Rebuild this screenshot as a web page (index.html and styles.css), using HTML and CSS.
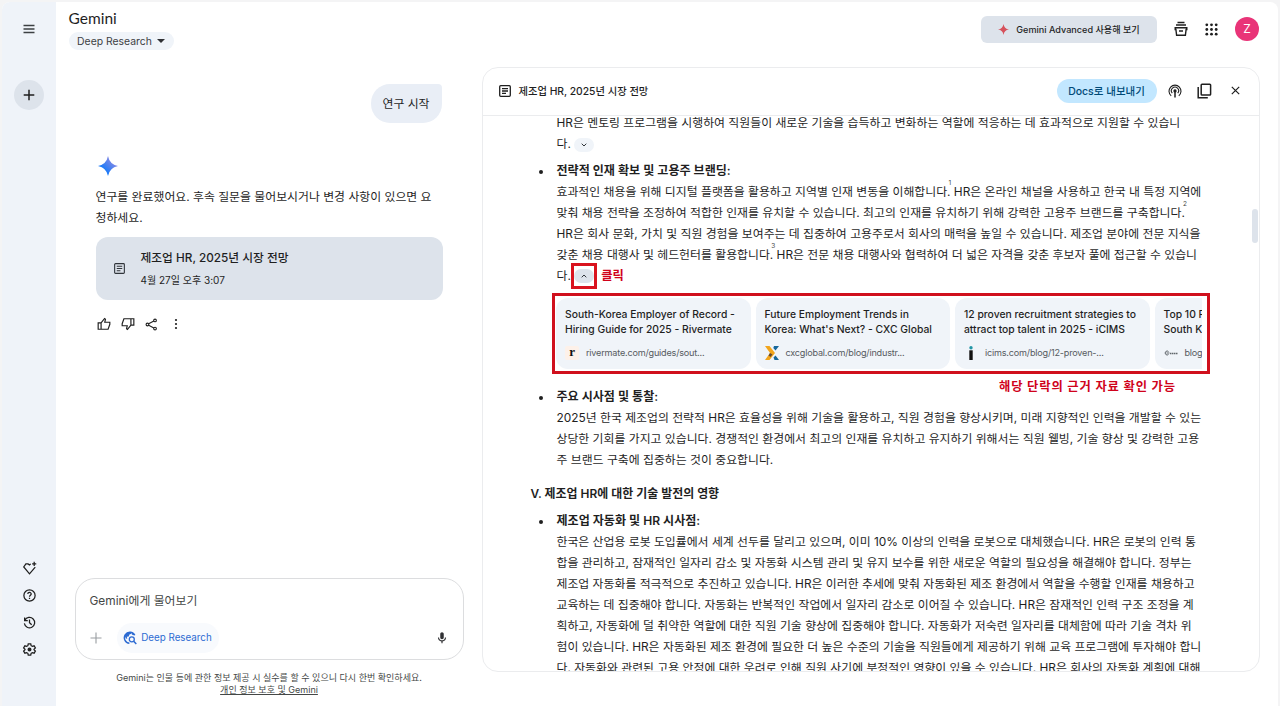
FILE: index.html
```html
<!DOCTYPE html>
<html lang="ko">
<head>
    <meta charset="UTF-8">
    <meta name="viewport" content="width=device-width, initial-scale=1.0">
    <title>Gemini</title>
    <link rel="stylesheet" href="styles.css">
</head>
<body>
    <div class="app">

        <!-- Sidebar -->
        <nav class="sidebar">
            <button class="icon-btn menu-btn"><svg width="12" height="12" viewBox="0 0 12 12"><path d="M.5 2.500h11M.5 6h11M.5 9.500h11" stroke="#3c4043" stroke-width="1.700"/></svg></button>
            <button class="icon-btn new-chat"><svg width="12" height="12" viewBox="0 0 12 12"><path d="M6 .7v10.6M.7 6h10.6" stroke="#1f1f1f" stroke-width="1.5"/></svg></button>
            <div class="sidebar-bottom">
                <svg class="line" width="15" height="15" viewBox="0 0 24 24"><path d="M14 4.6 12 6.2 9.6 4.6H6.2L2.8 9.4 12 20.5l9.2-10.6"/><path d="M19.5 1.2v6.6M16.2 4.5h6.6"/></svg>
                <svg class="line" width="15" height="15" viewBox="0 0 24 24"><circle cx="12" cy="12" r="9"/><path d="M9.2 9.6c.2-3.4 5.6-3.2 5.5 0 0 2-2.7 2.1-2.7 4.4M12 15.7v2"/></svg>
                <svg class="line" width="15" height="15" viewBox="0 0 24 24"><path d="M4.2 3.8v5h5M4.6 8.4A8.3 8.3 0 1 1 3.8 13.5M12 7.3v5l3.5 3.4"/></svg>
                <svg class="line" width="15" height="15" viewBox="0 0 24 24"><path d="M10 3h4l.6 2.900 2 1.100 2.800-.9 2 3.400-2.200 2v1l2.200 2-2 3.400-2.800-.9-2 1.100L14 21h-4l-.6-2.900-2-1.100-2.800.9-2-3.400 2.200-2v-1l-2.200-2 2-3.400 2.800.9 2-1.100z"/><circle cx="12" cy="12" r="2.200" fill="#1f1f1f"/></svg>
            </div>
        </nav>

        <main class="main">
            <header class="topbar">
                <div class="brand">
                    <div class="brand-name">Gemini</div>
                    <button class="model-picker">Deep Research<span class="caret"></span></button>
                </div>
                <div class="top-actions">
                    <button class="upgrade"><svg width="11" height="11" viewBox="0 0 12 12"><path fill="#d6525c" d="M6 0Q6.7 5.3 12 6 6.7 6.7 6 12 5.3 6.7 0 6 5.3 5.3 6 0z"/></svg>Gemini Advanced 사용해 보기</button>
                    <svg class="archive" width="16" height="16" viewBox="0 0 16 16" fill="none" stroke="#1f1f1f" stroke-width="1.4"><path d="M4.500 1.500h7M3 4h10M2.200 6.700h11.600v1.800h-.7l-.7 5.800H3.600l-.7-5.800h-.7zM6 10h4"/></svg>
                    <svg class="apps" width="13" height="13" viewBox="0 0 13 13" fill="#1f1f1f"><circle cx="1.8" cy="1.8" r="1.4"/><circle cx="6.5" cy="1.8" r="1.4"/><circle cx="11.2" cy="1.8" r="1.4"/><circle cx="1.8" cy="6.5" r="1.4"/><circle cx="6.5" cy="6.5" r="1.4"/><circle cx="11.2" cy="6.5" r="1.4"/><circle cx="1.8" cy="11.2" r="1.4"/><circle cx="6.5" cy="11.2" r="1.4"/><circle cx="11.2" cy="11.2" r="1.4"/></svg>
                    <div class="avatar">Z</div>
                </div>
            </header>

            <div class="content">

                <!-- Chat -->
                <section class="chat">
                    <div class="messages">
                        <div class="user-bubble">연구 시작</div>
                        <svg class="spark" width="20" height="20" viewBox="0 0 20 20">
                            <defs><linearGradient id="spark" x1="0" y1="1" x2="1" y2="0"><stop offset=".3" stop-color="#1a7af8"/><stop offset=".9" stop-color="#a48ee0"/></linearGradient></defs>
                            <path fill="url(#spark)" d="M10 0Q11.6 8.4 20 10 11.6 11.6 10 20 8.4 11.6 0 10 8.4 8.4 10 0z"/>
                        </svg>
                        <p class="reply">연구를 완료했어요. 후속 질문을 물어보시거나 변경 사항이 있으면 요<br>청하세요.</p>
                        <div class="doc-card">
                            <svg width="11" height="11" viewBox="0 0 12 12" fill="none" stroke="#30353a" stroke-width="1.2"><rect x=".7" y=".7" width="10.6" height="10.6" rx="1"/><path d="M3 3.6h6M3 6h6M3 8.4h4"/></svg>
                            <div class="doc-info">
                                <div class="doc-title">제조업 HR, 2025년 시장 전망</div>
                                <div class="doc-date">4월 27일 오후 3:07</div>
                            </div>
                        </div>
                        <div class="feedback">
                            <svg class="line" width="14" height="14" viewBox="0 0 24 24"><path d="M2 10h5v11H2zM7 10l6-7.5 1.5 1.2L13.3 9H22v3.5L19 21H7"/></svg>
                            <svg class="line" width="14" height="14" viewBox="0 0 24 24"><path d="M22 14h-5V3h5zM17 14l-6 7.5-1.500-1.200L10.700 15H2v-3.500L5 3h12"/></svg>
                            <svg class="line" width="13" height="13" viewBox="0 0 24 24"><circle cx="18.500" cy="4.500" r="2.500"/><circle cx="4.500" cy="12" r="2.500"/><circle cx="18.500" cy="19.500" r="2.500"/><path d="m6.800 10.800 9.500-5.100M6.800 13.200l9.500 5.100"/></svg>
                            <svg class="dots" width="4" height="12" viewBox="0 0 4 12" fill="#1f1f1f"><circle cx="2" cy="2" r="1.100"/><circle cx="2" cy="6" r="1.100"/><circle cx="2" cy="10" r="1.100"/></svg>
                        </div>
                    </div>

                    <div class="prompt">
                        <div class="placeholder">Gemini에게 물어보기</div>
                        <div class="prompt-tools">
                            <svg width="12" height="12" viewBox="0 0 12 12"><path d="M6 .5v11M.5 6h11" stroke="#999da1" stroke-width="1.100"/></svg>
                            <button class="tool-chip">
                                <svg width="14" height="14" viewBox="0 0 14 14" fill="none"><path d="M11.800 4.300A5.500 5.500 0 1 0 6.400 12.200" stroke="#2d6bd2" stroke-width="1.400"/><path fill="#2d6bd2" d="M1.500 4.200 4 1.800 7.600 1l.8 1.800-2 .7-.7 1.900-1.900.4.5 1.700-1.400.3zM9 1.400l2.600 2-1 .9-1.800-.8z"/><circle cx="8.800" cy="8.300" r="2.500" stroke="#2d6bd2" stroke-width="1.300"/><path d="m10.700 10.200 2.600 2.700" stroke="#2d6bd2" stroke-width="1.500"/></svg>
                                Deep Research
                            </button>
                            <svg class="mic" width="14" height="14" viewBox="0 0 24 24"><path fill="#303134" d="M12 14c1.660 0 3-1.340 3-3V5c0-1.660-1.340-3-3-3S9 3.340 9 5v6c0 1.660 1.340 3 3 3zm5-3c0 2.760-2.240 5-5 5s-5-2.240-5-5H5c0 3.530 2.610 6.430 6 6.920V21h2v-3.080c3.390-.49 6-3.390 6-6.920h-2z"/></svg>
                        </div>
                    </div>
                    <div class="disclaimer">Gemini는 인물 등에 관한 정보 제공 시 실수를 할 수 있으니 다시 한번 확인하세요.<br><a href="#">개인 정보 보호 및 Gemini</a></div>
                </section>

                <!-- Report panel -->
                <section class="report">
                    <header class="report-head">
                        <svg width="12" height="12" viewBox="0 0 12 12" fill="none" stroke="#1f1f1f" stroke-width="1.300"><rect x=".7" y=".7" width="10.600" height="10.600" rx="1"/><path d="M3 3.600h6M3 6h6M3 8.400h4"/></svg>
                        <h1>제조업 HR, 2025년 시장 전망</h1>
                        <button class="export">Docs로 내보내기</button>
                        <svg class="audio" width="14" height="14" viewBox="0 0 14 14" fill="none" stroke="#1f1f1f" stroke-width="1.100"><path d="M3.200 11.800A6 6 0 1 1 10.800 11.800M4.300 9.200a3.600 3.600 0 1 1 5.400 0"/><circle cx="7" cy="6.900" r="1.100" fill="#1f1f1f"/><path d="M7 7v6.500" stroke-width="1.500"/></svg>
                        <svg class="copy" width="15" height="16" viewBox="0 0 15 16" fill="none" stroke="#1f1f1f" stroke-width="1.500"><rect x="4.200" y="1.200" width="9.400" height="10.800" rx=".8"/><path d="M1.200 4v10.800h9.600"/></svg>
                        <svg class="close" width="9" height="9" viewBox="0 0 9 9"><path d="m.8.800 7.400 7.400M8.200.800.800 8.200" stroke="#1f1f1f" stroke-width="1.200"/></svg>
                    </header>

                    <div class="report-body">
                        <div class="item first">HR은 멘토링 프로그램을 시행하여 직원들이 새로운 기술을 습득하고 변화하는 역할에 적응하는 데 효과적으로 지원할 수 있습니<br>다. <span class="toggle"><svg width="6" height="4" viewBox="0 0 6 4"><path d="m.7.700 2.300 2.300L5.300.700" fill="none" stroke="#30353a"/></svg></span></div>

                        <div class="item bullet">
                            <b>전략적 인재 확보 및 고용주 브랜딩:</b><br>
                            효과적인 채용을 위해 디지털 플랫폼을 활용하고 지역별 인재 변동을 이해합니다.<sup>1</sup> HR은 온라인 채널을 사용하고 한국 내 특정 지역에<br>
                            맞춰 채용 전략을 조정하여 적합한 인재를 유치할 수 있습니다. 최고의 인재를 유치하기 위해 강력한 고용주 브랜드를 구축합니다.<sup>2</sup><br>
                            HR은 회사 문화, 가치 및 직원 경험을 보여주는 데 집중하여 고용주로서 회사의 매력을 높일 수 있습니다. 제조업 분야에 전문 지식을<br>
                            갖춘 채용 대행사 및 헤드헌터를 활용합니다.<sup>3</sup> HR은 전문 채용 대행사와 협력하여 더 넓은 자격을 갖춘 후보자 풀에 접근할 수 있습니<br>
                            다. <span class="toggle open"><svg width="6" height="4" viewBox="0 0 6 4"><path d="M.7 3.300 3 1l2.300 2.300" fill="none" stroke="#30353a"/></svg></span><span class="note-click">클릭</span>
                        </div>

                        <div class="sources">
                            <div class="source-list">
                                <div class="source">
                                    <div class="source-title">South-Korea Employer of Record -<br>Hiring Guide for 2025 - Rivermate</div>
                                    <div class="source-url"><span class="fav fav-river">r</span>rivermate.com/guides/sout...</div>
                                </div>
                                <div class="source">
                                    <div class="source-title">Future Employment Trends in<br>Korea: What's Next? - CXC Global</div>
                                    <div class="source-url"><svg class="fav" viewBox="0 0 14 14"><path fill="#f2a51c" d="M0 0h4.500l5.500 7-5.500 7H0l5-7z"/><path fill="#17689c" d="M9 0h5l-3.500 4.500L8.300 2zM8.500 11.500 10.500 9.500 14 14H9.500z"/><path fill="#654b32" d="m5 7 2.500 1.500L5.500 11l-2-1.500z"/></svg>cxcglobal.com/blog/industr...</div>
                                </div>
                                <div class="source">
                                    <div class="source-title">12 proven recruitment strategies to<br>attract top talent in 2025 - iCIMS</div>
                                    <div class="source-url"><svg class="fav" viewBox="0 0 14 14"><circle cx="7" cy="1.700" r="1.700" fill="#2295a5"/><path fill="#111" d="M5.300 4.300h3.400V14H5.300z"/></svg>icims.com/blog/12-proven-...</div>
                                </div>
                                <div class="source">
                                    <div class="source-title">Top 10 R<br>South K</div>
                                    <div class="source-url"><svg class="fav" viewBox="0 0 14 14" fill="none" stroke="#60666b"><path d="M4.500 5.500A2 2 0 1 0 4.500 8.500M2.500 7h3"/><path d="M6 7.500h8" stroke-dasharray="1.500 .5" stroke-width="1.600"/></svg>blog</div>
                                </div>
                            </div>
                            <div class="note-source">해당 단락의 근거 자료 확인 가능</div>
                        </div>

                        <div class="item bullet">
                            <b>주요 시사점 및 통찰:</b><br>
                            2025년 한국 제조업의 전략적 HR은 효율성을 위해 기술을 활용하고, 직원 경험을 향상시키며, 미래 지향적인 인력을 개발할 수 있는<br>
                            상당한 기회를 가지고 있습니다. 경쟁적인 환경에서 최고의 인재를 유치하고 유지하기 위해서는 직원 웰빙, 기술 향상 및 강력한 고용<br>
                            주 브랜드 구축에 집중하는 것이 중요합니다.
                        </div>

                        <h2>V. 제조업 HR에 대한 기술 발전의 영향</h2>

                        <div class="item bullet">
                            <b>제조업 자동화 및 HR 시사점:</b><br>
                            한국은 산업용 로봇 도입률에서 세계 선두를 달리고 있으며, 이미 10% 이상의 인력을 로봇으로 대체했습니다. HR은 로봇의 인력 통<br>
                            합을 관리하고, 잠재적인 일자리 감소 및 자동화 시스템 관리 및 유지 보수를 위한 새로운 역할의 필요성을 해결해야 합니다. 정부는<br>
                            제조업 자동화를 적극적으로 추진하고 있습니다. HR은 이러한 추세에 맞춰 자동화된 제조 환경에서 역할을 수행할 인재를 채용하고<br>
                            교육하는 데 집중해야 합니다. 자동화는 반복적인 작업에서 일자리 감소로 이어질 수 있습니다. HR은 잠재적인 인력 구조 조정을 계<br>
                            획하고, 자동화에 덜 취약한 역할에 대한 직원 기술 향상에 집중해야 합니다. 자동화가 저숙련 일자리를 대체함에 따라 기술 격차 위<br>
                            험이 있습니다. HR은 자동화된 제조 환경에 필요한 더 높은 수준의 기술을 직원들에게 제공하기 위해 교육 프로그램에 투자해야 합니<br>
                            다. 자동화와 관련된 고용 안정에 대한 우려로 인해 직원 사기에 부정적인 영향이 있을 수 있습니다. HR은 회사의 자동화 계획에 대해
                        </div>
                    </div>
                    <div class="scroll-thumb"></div>
                </section>
            </div>
        </main>
    </div>
</body>
</html>
```

FILE: styles.css
```css
* {
    box-sizing: border-box;
}

body {
    margin: 0;
    height: 706px;
    padding: 2px 2px 0;
    overflow: hidden;
    background: #f4f4f5;
    color: #1f1f1f;
    font-family: Inter, "Noto Sans CJK KR", sans-serif;
    font-size: 11.88px;
}

button {
    font-family: inherit;
    color: inherit;
    border: none;
    padding: 0;
    display: flex;
    align-items: center;
    justify-content: center;
    white-space: nowrap;
}

svg {
    flex: none;
    display: block;
}

.line {
    fill: none;
    stroke: #1f1f1f;
    stroke-width: 2;
}

.app {
    display: flex;
    height: 704px;
    background: #fff;
    border-radius: 8px 8px 0 0;
    overflow: hidden;
}

/* sidebar */
.sidebar {
    width: 54px;
    background: #eff3f9;
    display: flex;
    flex-direction: column;
    align-items: center;
    padding: 12px 0 49px;
}

.icon-btn {
    width: 30px;
    height: 30px;
    border-radius: 50%;
    background: none;
}

.new-chat {
    background: #dde3eb;
    margin-top: 36px;
}

.sidebar-bottom {
    margin-top: auto;
    display: flex;
    flex-direction: column;
    gap: 12px;
}

.main {
    flex: 1;
    display: flex;
    flex-direction: column;
}

/* top bar */
.topbar {
    height: 65px;
    display: flex;
    justify-content: space-between;
    padding: 0 19px 0 12.5px;
}

.brand-name {
    font-family: Lato, sans-serif;
    font-size: 15.5px;
    line-height: 20px;
    margin-top: 6px;
}

.model-picker {
    width: 105px;
    height: 18px;
    margin-top: 4px;
    border-radius: 9px;
    background: #f0f4f9;
    font-size: 10.4px;
    color: #3c4043;
    gap: 5px;
}

.caret {
    border: 4px solid transparent;
    border-top-color: #303134;
    border-bottom: 0;
}

.top-actions {
    display: flex;
    align-items: center;
    height: 54px;
}

.upgrade {
    width: 176px;
    height: 27px;
    border-radius: 6px;
    background: #dde3eb;
    font-size: 9.1px;
    font-weight: 500;
    gap: 7px;
}

.archive {
    margin-left: 16px;
}

.apps {
    margin-left: 16px;
}

.avatar {
    width: 24px;
    height: 24px;
    margin-left: 17px;
    border-radius: 50%;
    background: #e93478;
    color: #fff;
    font-size: 12px;
    line-height: 24px;
    text-align: center;
}

.content {
    flex: 1;
    display: flex;
}

/* chat */
.chat {
    width: 425.5px;
    display: flex;
    flex-direction: column;
    padding: 17px 18px 10.5px 18.5px;
}

.messages {
    flex: 1;
    display: flex;
    flex-direction: column;
    padding: 0 21px;
}

.user-bubble {
    align-self: flex-end;
    width: 71px;
    height: 39px;
    margin-right: 1px;
    border-radius: 19px 4px 19px 19px;
    background: #e9eef6;
    line-height: 39px;
    text-align: center;
}

.spark {
    margin: 33px 0 0 2px;
}

.reply {
    margin: 10px 0 9px;
    line-height: 21px;
    white-space: nowrap;
}

.doc-card {
    height: 63px;
    border-radius: 12px;
    background: #dde3eb;
    display: flex;
    align-items: center;
    gap: 16px;
    padding-left: 18px;
}

.doc-info {
    padding-top: 2px;
}

.doc-title {
    font-size: 11.75px;
    font-weight: 500;
    line-height: 22px;
}

.doc-date {
    font-size: 10px;
    line-height: 23px;
}

.feedback {
    display: flex;
    align-items: center;
    gap: 10px;
    margin: 17px 0 0 1px;
}

.dots {
    margin-left: 6px;
}

.prompt {
    height: 82px;
    border: 1px solid #dcdddf;
    border-radius: 20px;
    padding: 12px 14px;
}

.placeholder {
    color: #444746;
    line-height: 20px;
}

.prompt-tools {
    display: flex;
    align-items: center;
    margin-top: 12px;
}

.tool-chip {
    width: 102px;
    height: 30px;
    margin: 0 auto 0 15px;
    border-radius: 15px;
    background: #f8fafd;
    color: #2d6bd2;
    font-size: 9.8px;
    gap: 4px;
}

.disclaimer {
    margin-top: 12px;
    text-align: center;
    color: #444746;
    font-size: 9.03px;
    line-height: 12px;
    white-space: nowrap;
}

.disclaimer a {
    color: inherit;
}

/* report */
.report {
    position: relative;
    width: 778px;
    height: 605px;
    border: 1px solid #ebecee;
    border-radius: 16px;
    overflow: hidden;
}

.report-head {
    display: flex;
    align-items: center;
    height: 48px;
    padding: 0 19px 2px 16px;
    border-bottom: 1px solid #ebecee;
}

.report-head h1 {
    margin: 0 auto 0 8px;
    font-size: 10.3px;
    font-weight: 500;
}

.export {
    width: 100px;
    height: 24px;
    border-radius: 12px;
    background: #c2e7ff;
    color: #004a77;
    font-size: 10.5px;
    font-weight: 500;
}

.audio {
    margin-left: 11px;
}

.copy {
    margin-left: 15px;
}

.close {
    margin-left: 19px;
}

.report-body {
    height: 555px;
    padding-left: 48px;
    overflow: hidden;
    white-space: nowrap;
}

.item {
    position: relative;
    padding-left: 26px;
    line-height: 20.95px;
}

.item.first {
    margin: -3px 0 6px;
}

.item b,
.report-body h2 {
    font-weight: 600;
    font-size: 12.05px;
    line-height: 1;
}

.bullet::before {
    content: "";
    position: absolute;
    left: 8px;
    top: 9px;
    width: 4px;
    height: 4px;
    border-radius: 50%;
    background: #1f1f1f;
}

sup {
    display: inline-block;
    width: 0;
    font-size: 6.5px;
    line-height: 0;
    text-indent: -2px;
    vertical-align: 11px;
    color: #444746;
}

.toggle {
    position: relative;
    display: inline-flex;
    align-items: center;
    justify-content: center;
    width: 20px;
    height: 14px;
    border-radius: 7px;
    background: #f0f4f9;
    vertical-align: middle;
}

.toggle.open {
    background: #dde3eb;
}

/* red callouts drawn over the report */
.toggle.open::after {
    content: "";
    position: absolute;
    inset: -6px -3px;
    border: 3px solid #d9131e;
}

.note-click {
    margin-left: 7px;
    color: #d0021b;
    font-weight: 700;
    font-size: 12.3px;
    line-height: 1;
}

.sources {
    position: relative;
    width: 658px;
    height: 81px;
    margin: 6px 0 13.5px 21.5px;
    border: 3px solid #d0101d;
    padding: 2px 5px 0 1px;
}

.source-list {
    display: flex;
    gap: 5px;
    overflow: hidden;
}

.source {
    flex: none;
    width: 194.5px;
    height: 71px;
    border-radius: 12px;
    background: #f0f4f9;
    padding: 9px;
}

.source-title {
    font-size: 10.35px;
    font-weight: 500;
    line-height: 15px;
}

.source-url {
    display: flex;
    align-items: center;
    gap: 7px;
    margin-top: 9px;
    height: 14px;
    font-size: 9.1px;
    letter-spacing: -.2px;
    color: #575b5f;
}

.fav {
    width: 14px;
    height: 14px;
}

.fav-river {
    background: #fdf1e9;
    color: #111;
    border-radius: 2px;
    font: bold 13px/12px "Liberation Serif", serif;
    text-align: center;
}

.note-source {
    position: absolute;
    left: 444px;
    top: 81px;
    color: #d0021b;
    font-size: 12.3px;
    font-weight: 700;
    line-height: 20px;
    letter-spacing: .85px;
}

.report-body h2 {
    margin: 12px 0 7px;
    font-size: 11.95px;
    line-height: 21px;
}

.scroll-thumb {
    position: absolute;
    right: 1px;
    top: 141px;
    width: 6px;
    height: 34px;
    border-radius: 3px;
    background: #dde3eb;
}
```
